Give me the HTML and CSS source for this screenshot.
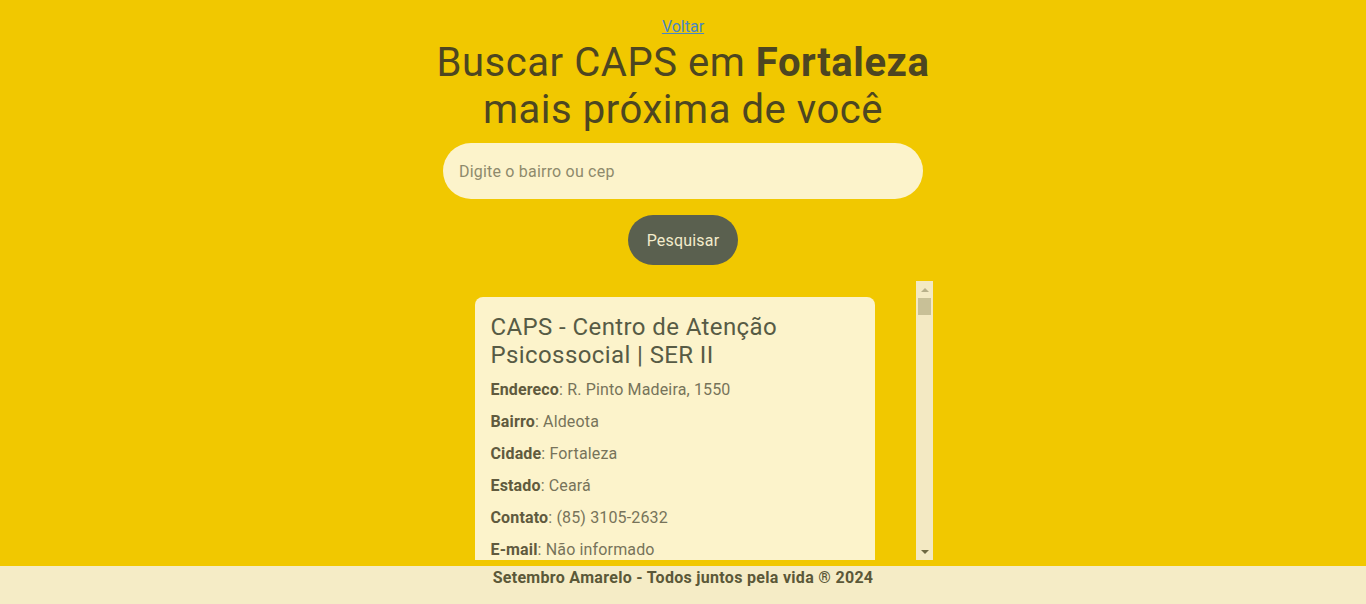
FILE: index.html
```html
<!DOCTYPE html>
<html lang="pt-BR">
<head>
<meta charset="utf-8">
<title>Buscar CAPS</title>
<link rel="stylesheet" href="styles.css">
</head>
<body>
<main class="page">
  <a class="back" href="#">Voltar</a>
  <h1 class="title">Buscar CAPS em <strong>Fortaleza</strong><br>mais próxima de você</h1>
  <form class="search">
    <input class="search-input" type="text" placeholder="Digite o bairro ou cep">
    <button class="search-btn" type="button">Pesquisar</button>
  </form>
  <div class="results-wrap">
    <section class="results">
      <article class="card">
        <h2 class="card-title">CAPS - Centro de Atenção Psicossocial | SER II</h2>
        <p class="field"><b>Endereco</b>: R. Pinto Madeira, 1550</p>
        <p class="field"><b>Bairro</b>: Aldeota</p>
        <p class="field"><b>Cidade</b>: Fortaleza</p>
        <p class="field"><b>Estado</b>: Ceará</p>
        <p class="field"><b>Contato</b>: (85) 3105-2632</p>
        <p class="field"><b>E-mail</b>: Não informado</p>
      </article>
    </section>
    <div class="scrollbar" aria-hidden="true">
      <span class="sb-btn"><span class="arrow-up"></span></span>
      <span class="sb-track"><span class="sb-thumb"></span></span>
      <span class="sb-btn"><span class="arrow-down"></span></span>
    </div>
  </div>
</main>
<footer class="footer">Setembro Amarelo - Todos juntos pela vida ® 2024</footer>
</body>
</html>
```
FILE: styles.css
```css
* { box-sizing: border-box; }
html, body { height: 100%; }
body {
  margin: 0;
  background: #f1c800;
  font-family: Roboto, "Liberation Sans", sans-serif;
  color: #4d4621;
  display: flex;
  flex-direction: column;
  overflow: hidden;
}
.page {
  flex: 1;
  min-height: 0;
  display: flex;
  flex-direction: column;
  align-items: center;
  padding-top: 18px;
}
.back {
  font-size: 16px;
  line-height: 18px;
  color: #4a86c5;
  text-decoration: underline;
}
.title {
  margin: 3px 0 0;
  font-size: 40px;
  font-weight: 400;
  line-height: 47px;
  text-align: center;
  color: #4d4621;
  letter-spacing: 0.55px;
}
.title strong { font-weight: 700; }
.search {
  display: flex;
  flex-direction: column;
  align-items: center;
  gap: 16px;
  margin-top: 10px;
}
.search-input {
  width: 480px;
  height: 56px;
  border: none;
  border-radius: 28px;
  background: #fcf3cb;
  padding: 0 16px;
  font-family: inherit;
  font-size: 16px;
  letter-spacing: 0.2px;
  color: #4d4621;
  outline: none;
}
.search-input::placeholder { color: #8e8a6c; }
.search-btn {
  width: 110px;
  height: 50px;
  border: none;
  border-radius: 25px;
  background: #5a604f;
  color: #f3eccc;
  font-family: inherit;
  font-size: 16px;
  letter-spacing: 0.2px;
}
.results-wrap {
  margin-top: 16px;
  margin-bottom: 6px;
  width: 500px;
  flex: 1;
  min-height: 0;
  display: flex;
}
.results {
  flex: 1;
  min-width: 0;
  overflow: hidden;
  display: flex;
  flex-direction: column;
  align-items: center;
  padding-top: 16px;
}
.scrollbar {
  width: 17px;
  flex-shrink: 0;
  background: #f3e9c3;
  display: flex;
  flex-direction: column;
}
.sb-btn {
  height: 17px;
  flex-shrink: 0;
  display: flex;
  align-items: center;
  justify-content: center;
}
.arrow-up,
.arrow-down {
  width: 0;
  height: 0;
  border-left: 4px solid transparent;
  border-right: 4px solid transparent;
}
.arrow-up { border-bottom: 4px solid #b8b08a; }
.arrow-down { border-top: 4px solid #6e6842; }
.sb-track {
  flex: 1;
  padding: 0 2px;
}
.sb-thumb {
  display: block;
  height: 17px;
  background: #c8c097;
}
.card {
  width: 400px;
  flex-shrink: 0;
  background: #fcf3cb;
  border-radius: 8px;
  padding: 16px 16px 16px;
  color: #77735a;
}
.card-title {
  margin: 0 0 11px;
  font-size: 24px;
  font-weight: 400;
  line-height: 28px;
  letter-spacing: 0.4px;
  color: #575b45;
}
.field {
  margin: 0 0 12px;
  font-size: 16px;
  line-height: 20px;
  letter-spacing: 0.15px;
}
.field b { color: #605a3e; font-weight: 700; }
.footer {
  flex-shrink: 0;
  height: 38px;
  background: #f5ecc6;
  text-align: center;
  font-weight: 700;
  font-size: 16px;
  line-height: 24px;
  letter-spacing: 0.3px;
  color: #5b5838;
}
```
